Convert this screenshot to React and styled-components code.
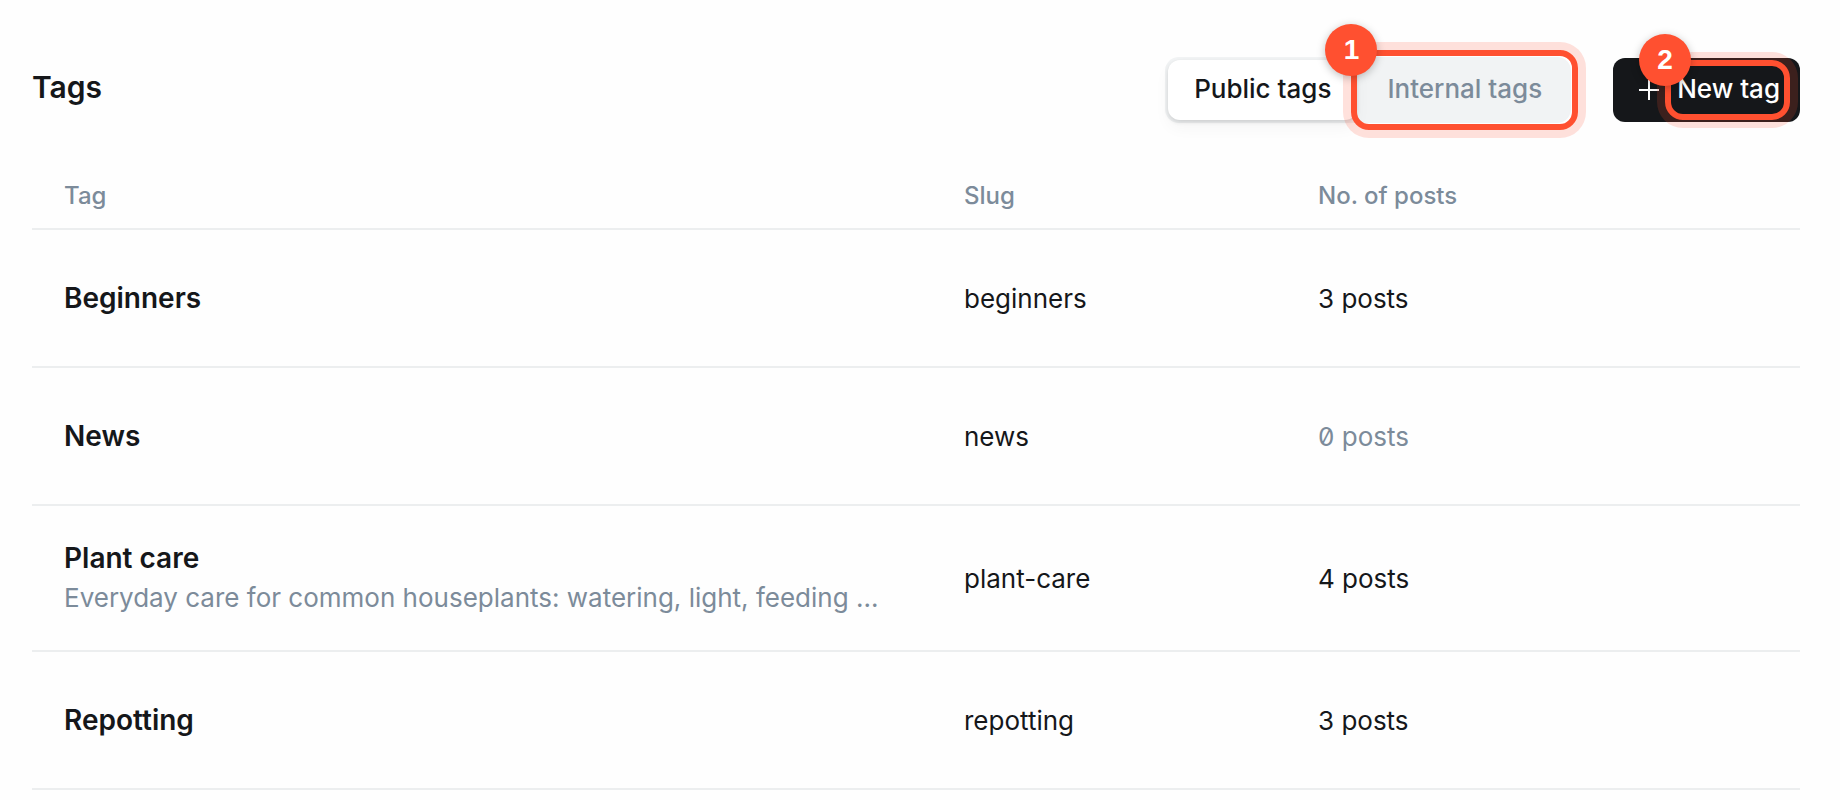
import React from 'react';
import styled, { createGlobalStyle } from 'styled-components';

const GlobalStyle = createGlobalStyle`
  *, *::before, *::after {
    box-sizing: border-box;
  }

  body {
    margin: 0;
    background: #fefefe;
    color: #15171a;
    font-family: Inter, 'Liberation Sans', sans-serif;
    font-size: 26px;
    line-height: 40px;
    font-feature-settings: 'zero';
  }
`;

const Page = styled.main`
  padding: 57px 40px 0 32px;
`;

const Header = styled.header`
  display: flex;
  align-items: center;
  justify-content: space-between;
  height: 66px;
`;

const Title = styled.h1`
  margin: 0;
  padding-bottom: 6px;
  font-size: 30px;
  font-weight: 600;
`;

const Actions = styled.div`
  display: flex;
  align-items: center;
  gap: 42px;
`;

const TagSwitch = styled.div`
  display: flex;
  gap: 4px;
  padding: 3px;
  border-radius: 14px;
  background: #f1f3f4;
`;

const SwitchButton = styled.button`
  position: relative;
  height: 60px;
  padding: 0 26px 2px;
  border: 0;
  border-radius: 12px;
  font: inherit;
  font-weight: 500;
  white-space: nowrap;
  color: ${({ $active }) => ($active ? '#15171a' : '#7c8b9a')};
  background: ${({ $active }) => ($active ? '#ffffff' : 'transparent')};
  box-shadow: ${({ $active }) => ($active ? '0 2px 4px rgba(0, 0, 0, 0.12), 0 8px 16px rgba(0, 0, 0, 0.04)' : 'none')};
`;

const NewTagButton = styled.button`
  display: flex;
  align-items: center;
  gap: 18px;
  height: 64px;
  padding: 0 20px 0 26px;
  border: 0;
  border-radius: 12px;
  background: #15171a;
  color: #ffffff;
  font: inherit;
  font-weight: 500;
  white-space: nowrap;
`;

const ButtonLabel = styled.span`
  position: relative;
  padding-bottom: 2px;
`;

const Highlight = styled.span`
  position: absolute;
  inset: ${({ $inset }) => $inset};
  border: 6px solid #ff5030;
  border-radius: 18px;
  box-shadow: 0 0 0 8px rgba(255, 80, 48, 0.17);
  pointer-events: none;
`;

const Badge = styled.span`
  position: absolute;
  top: -32px;
  left: -32px;
  width: 52px;
  height: 52px;
  border-radius: 50%;
  background: #ff5030;
  color: #ffffff;
  font-family: 'Liberation Sans', sans-serif;
  font-size: 28px;
  font-weight: 700;
  line-height: 52px;
  text-align: center;
  box-shadow: 0 2px 8px rgba(0, 0, 0, 0.25);
`;

const Table = styled.table`
  width: 100%;
  margin-top: 44px;
  border-collapse: separate;
  border-spacing: 0;
  table-layout: fixed;
`;

const HeadCell = styled.th`
  width: ${({ $width }) => $width};
  height: 63px;
  padding: 0 0 4px 32px;
  border-bottom: 2px solid #eceeef;
  color: #7c8b9a;
  font-size: 24px;
  font-weight: 500;
  text-align: left;
`;

const Cell = styled.td`
  height: 138px;
  padding: 34px 0 32px 32px;
  border-bottom: 2px solid #eceeef;
  color: ${({ $muted }) => ($muted ? '#7c8b9a' : '#15171a')};
  vertical-align: middle;
`;

const TagCell = styled(Cell)`
  padding-top: 32px;
`;

const TagName = styled.h2`
  margin: 0;
  font-size: 28px;
  font-weight: 600;
`;

const Description = styled.p`
  margin: 0 32px 0 0;
  color: #7c8b9a;
  overflow: hidden;
  text-overflow: ellipsis;
  white-space: nowrap;
`;

const tags = [
  { name: 'Beginners', slug: 'beginners', posts: 3 },
  { name: 'News', slug: 'news', posts: 0 },
  {
    name: 'Plant care',
    slug: 'plant-care',
    posts: 4,
    description: 'Everyday care for common houseplants: watering, light, feeding ...',
  },
  { name: 'Repotting', slug: 'repotting', posts: 3 },
];

const Callout = ({ number, inset }) => (
  <Highlight $inset={inset}>
    <Badge>{number}</Badge>
  </Highlight>
);

const PlusIcon = () => (
  <svg width="20" height="20" viewBox="0 0 20 20" fill="none" stroke="currentColor" strokeWidth="2" aria-hidden="true">
    <path d="M10 0v20M0 10h20" />
  </svg>
);

const App = () => {
  return (
    <>
      <GlobalStyle />
      <Page>
        <Header>
          <Title>Tags</Title>
          <Actions>
            <TagSwitch>
              <SwitchButton type="button" $active>Public tags</SwitchButton>
              <SwitchButton type="button">
                Internal tags
                <Callout number={1} inset="-10px" />
              </SwitchButton>
            </TagSwitch>
            <NewTagButton type="button">
              <PlusIcon />
              <ButtonLabel>
                New tag
                <Callout number={2} inset="-9px -10px -9px -12px" />
              </ButtonLabel>
            </NewTagButton>
          </Actions>
        </Header>
        <Table>
          <thead>
            <tr>
              <HeadCell>Tag</HeadCell>
              <HeadCell $width="354px">Slug</HeadCell>
              <HeadCell $width="514px">No. of posts</HeadCell>
            </tr>
          </thead>
          <tbody>
            {tags.map((tag) => (
              <tr key={tag.slug}>
                <TagCell>
                  <TagName>{tag.name}</TagName>
                  {tag.description && <Description>{tag.description}</Description>}
                </TagCell>
                <Cell>{tag.slug}</Cell>
                <Cell $muted={tag.posts === 0}>{tag.posts} posts</Cell>
              </tr>
            ))}
          </tbody>
        </Table>
      </Page>
    </>
  );
};

export default App;
